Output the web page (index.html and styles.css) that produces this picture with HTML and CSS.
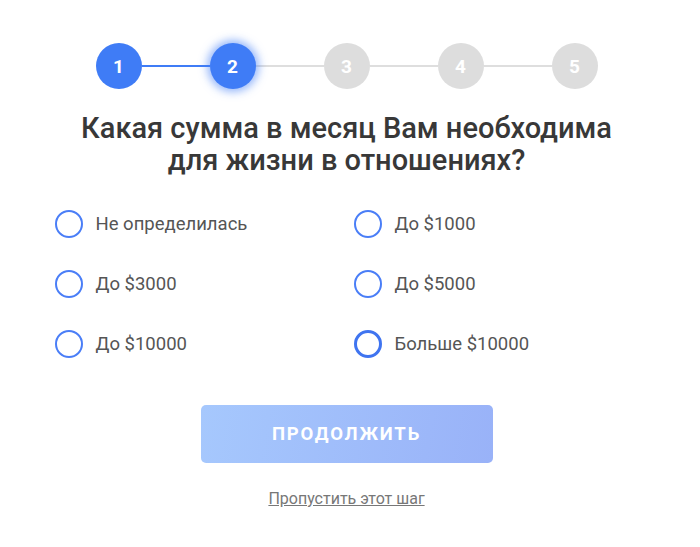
FILE: index.html
```html
<!DOCTYPE html>
<html lang="ru">
<head>
    <meta charset="UTF-8">
    <meta name="viewport" content="width=device-width, initial-scale=1.0">
    <title>Опрос</title>
    <link rel="stylesheet" href="styles.css">
</head>
<body>
    <div class="quiz">
        <div class="steps">
            <div class="step done">1</div>
            <div class="step-line done"></div>
            <div class="step current">2</div>
            <div class="step-line"></div>
            <div class="step">3</div>
            <div class="step-line"></div>
            <div class="step">4</div>
            <div class="step-line"></div>
            <div class="step">5</div>
        </div>

        <h2 class="question">Какая сумма в месяц Вам необходима<br>для жизни в отношениях?</h2>

        <div class="options">
            <label class="option"><span class="radio"></span>Не определилась</label>
            <label class="option"><span class="radio"></span>До $1000</label>
            <label class="option"><span class="radio"></span>До $3000</label>
            <label class="option"><span class="radio"></span>До $5000</label>
            <label class="option"><span class="radio"></span>До $10000</label>
            <label class="option hover"><span class="radio"></span>Больше $10000</label>
        </div>

        <button class="next-btn">Продолжить</button>
        <a href="#" class="skip-link">Пропустить этот шаг</a>
    </div>
</body>
</html>
```

FILE: styles.css
```css
body {
    margin: 0;
    background-color: #fff;
    font-family: Roboto, "Liberation Sans", Arial, sans-serif;
}

.quiz {
    display: flex;
    flex-direction: column;
    align-items: center;
    padding-top: 43px;
    padding-right: 7px;
}

.steps {
    display: flex;
    align-items: center;
}

.step {
    width: 46px;
    height: 46px;
    border-radius: 50%;
    background-color: #dddddd;
    color: #fff;
    font-size: 19px;
    font-weight: bold;
    display: flex;
    align-items: center;
    justify-content: center;
    position: relative;
    z-index: 1;
}

.step.done,
.step.current {
    background-color: #3f7cf6;
}

.step.current {
    box-shadow: 0 0 8px 3px rgba(63, 124, 246, 0.55);
}

.step-line {
    width: 68px;
    height: 2px;
    background-color: #dedede;
}

.step-line.done {
    background-color: #3f7cf6;
}

.question {
    margin: 23px 0 18px;
    font-size: 29px;
    line-height: 32px;
    font-weight: 500;
    color: #383838;
    text-align: center;
}

.options {
    display: grid;
    grid-template-columns: 299px 299px;
    grid-auto-rows: 60px;
    margin-left: 14px;
}

.option {
    display: flex;
    align-items: center;
    font-size: 18.5px;
    color: #555;
    cursor: pointer;
}

.radio {
    width: 24px;
    height: 24px;
    border: 2px solid #4a7ef7;
    border-radius: 50%;
    margin-right: 13px;
}

.option.hover .radio {
    width: 22px;
    height: 22px;
    border-width: 3px;
    border-color: #3f74f0;
}

.next-btn {
    margin-top: 31px;
    width: 292px;
    height: 58px;
    border: none;
    border-radius: 5px;
    background: linear-gradient(100deg, #a6c8fd, #99b2f8);
    color: #fff;
    font-family: inherit;
    font-size: 18.5px;
    font-weight: bold;
    letter-spacing: 1.8px;
    text-transform: uppercase;
    cursor: pointer;
}

.skip-link {
    margin-top: 26px;
    font-size: 16px;
    line-height: 20px;
    color: #777;
    text-decoration: underline;
}
```
